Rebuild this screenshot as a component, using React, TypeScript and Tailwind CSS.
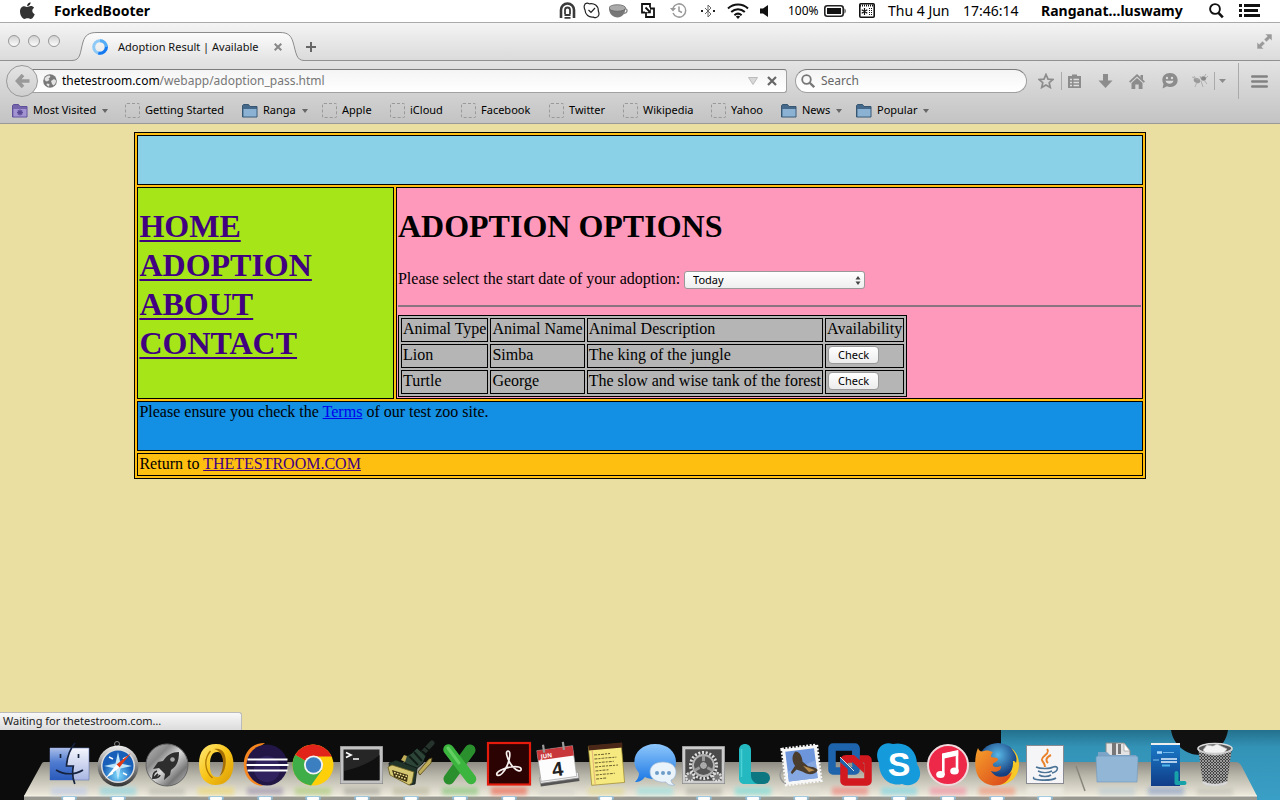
import React from "react";

type Kids = { children: React.ReactNode };

/* ---------- menu bar ---------- */

function Slot({ className, children }: Kids & { className: string }) {
  return <span className={"flex shrink-0 items-center justify-center " + className}>{children}</span>;
}

function AppleLogo() {
  return (
    <svg width="17" height="18" viewBox="0 0 17 18" aria-hidden="true">
      <path d="M11.6 0.3c.1 2.100-1.600 3.900-3.500 3.900-.1-2 1.600-3.700 3.500-3.900z" fill="#222" />
      <path d="M8.300 5c.8 0 1.900-.9 3.500-.9 1.400 0 2.600.7 3.300 1.700-2.600 1.500-2.300 5.200.6 6.400-.6 1.700-2.100 4.700-4 4.700-1.200 0-1.600-.7-3.100-.7s-2 .7-3.100.7C3.400 16.900 1 13 1 9.500c0-3.500 2.200-5.300 4.300-5.300 1.400 0 2.300.8 3 .8z" fill="#333" />
    </svg>
  );
}

function MenuBar() {
  return (
    <header className="flex h-[22px] items-center bg-white pb-px text-[14px] leading-5 text-black">
      <button className="ml-[19px]" aria-label="Apple menu"><AppleLogo /></button>
      <button className="ml-[18px] font-bold">ForkedBooter</button>
      <div className="ml-auto flex items-center pr-5">
        <Slot className="w-6">
          <svg width="17" height="17" viewBox="0 0 17 17" fill="none" stroke="#3a3a3a">
            <path d="M2 16V8a6.500 6.500 0 0 1 13 0v8" strokeWidth="2.600" />
            <path d="M6 12V8a2.500 2.500 0 0 1 5 0v4" strokeWidth="1.800" />
            <path d="M5.500 13h6M5.500 15.800h6" strokeWidth="1.800" />
          </svg>
        </Slot>
        <Slot className="w-6">
          <svg width="17" height="17" viewBox="0 0 17 17" fill="none" stroke="#222" strokeWidth="1.200">
            <path d="M2 8C.5 5 1 1.500 4 1.200c1.200-.1 2 .4 2.500.6C11 1 15.500 3.500 15.300 9c1.300 2.600.8 6.200-2.600 6.700-1.300.1-2-.4-2.600-.7C6 15.500 2.200 13 2 8z" />
            <path d="M5.500 8l2.500 2.500L12 6" />
          </svg>
        </Slot>
        <Slot className="w-[30px]">
          <svg width="19" height="14" viewBox="0 0 19 14">
            <path d="M0 4c0 6 4 9.500 8.500 9.500S16 10 16.500 4z" fill="#777" />
            <ellipse cx="8.300" cy="4" rx="8.300" ry="3.300" fill="#aaa" stroke="#666" strokeWidth=".8" />
            <path d="M16 5c3-.5 3 4-1.500 4.500" fill="none" stroke="#888" strokeWidth="1.300" />
          </svg>
        </Slot>
        <Slot className="w-[30px]">
          <svg width="14" height="15" viewBox="0 0 14 15" fill="none" stroke="#111" strokeWidth="1.800">
            <path d="M4 9.500H1V1h8v3.500M9 5.500h4V14H5V9" />
            <path d="M4.500 4.500L8 8" />
            <path d="M9.800 6v4.300H5.500z" fill="#111" stroke="none" />
          </svg>
        </Slot>
        <Slot className="w-[30px]">
          <svg width="17" height="16" viewBox="0 0 17 16" fill="none" stroke="#999" strokeWidth="1.500">
            <path d="M3 10a6.600 6.600 0 1 0 0-5M9 3.500V8l3 1.500" />
            <path d="M0 5l3 3.500L6 5z" fill="#999" stroke="none" />
          </svg>
        </Slot>
        <Slot className="w-[30px]">
          <svg width="14" height="14" viewBox="0 0 14 14" fill="none" stroke="#666">
            <path d="M4 4l6 6-3 3V1l3 3-6 6" />
            <path d="M0 7h2M12 7h2" stroke="#222" strokeWidth="2" />
          </svg>
        </Slot>
        <Slot className="w-[30px]">
          <svg width="22" height="16" viewBox="0 0 22 16" fill="none" stroke="#111" strokeWidth="2">
            <path d="M1 5.500c5.500-5.300 14.500-5.300 20 0M4.200 9c4-3.800 9.600-3.800 13.600 0M7.400 12.200c2.300-2 4.900-2 7.200 0" />
            <path d="M8.800 13.500L11 16l2.200-2.500c-1.200-1.100-3.200-1.100-4.400 0z" fill="#111" stroke="none" />
          </svg>
        </Slot>
        <Slot className="w-[22px]">
          <svg width="8" height="12" viewBox="0 0 8 12"><path d="M0 3.500h3L8 0v12L3 8.500H0z" fill="#111" /></svg>
        </Slot>
        <span className="ml-[13px] w-8 text-[12px]">100%</span>
        <Slot className="ml-1 w-[22px]">
          <svg width="22" height="12" viewBox="0 0 22 12">
            <rect x=".8" y=".8" width="18.400" height="10.400" rx="2.500" fill="none" stroke="#222" strokeWidth="1.600" />
            <rect x="3" y="3" width="14" height="6" fill="#111" />
            <path d="M20.500 3.500c1.500.5 1.500 4.500 0 5z" fill="#222" />
          </svg>
        </Slot>
        <Slot className="ml-[13px] w-4">
          <svg width="16" height="15" viewBox="0 0 16 15">
            <rect x=".8" y=".8" width="14.400" height="13.400" rx="1" fill="#fff" stroke="#111" strokeWidth="1.600" />
            <path d="M1 2.500h14" stroke="#111" strokeWidth="2" strokeDasharray="1 1" />
            <path d="M5.500 5v7M2.700 6.800l5.600 3.500M8.300 6.800l-5.600 3.500" stroke="#111" strokeWidth="1.200" />
            <path d="M10.500 5v8M12.500 5v8" stroke="#111" strokeDasharray="1 1" />
          </svg>
        </Slot>
        <span className="ml-[13px] w-[65px] whitespace-nowrap">Thu 4 Jun</span>
        <span className="ml-[10px] w-[60px] whitespace-nowrap">17:46:14</span>
        <button className="ml-[18px] w-[146px] whitespace-nowrap text-left font-bold">Ranganat…luswamy</button>
        <button className="ml-[22px]" aria-label="Spotlight">
          <svg width="15" height="16" viewBox="0 0 15 16" fill="none" stroke="#111"><circle cx="6" cy="6" r="4.900" strokeWidth="1.900" /><path d="M9.500 9.800l4.300 4.500" strokeWidth="2.600" /></svg>
        </button>
        <button className="ml-[15px]" aria-label="Notification centre">
          <svg width="21" height="13" viewBox="0 0 21 13" stroke="#111" strokeWidth="3"><path d="M0 1.500h3M5 1.500h16M0 6.500h3M5 6.500h14M0 11.500h3M5 11.500h16" /></svg>
        </button>
      </div>
    </header>
  );
}

/* ---------- browser chrome ---------- */

function TabStrip() {
  return (
    <div className="flex h-[39px] border-t border-[#aaa] bg-linear-to-b from-[#f4f4f4] to-[#dadada]">
      <div className="flex w-[72px] items-center gap-2 border-b border-[#909090] pb-px pl-2">
        {["Close window", "Minimise window", "Zoom window"].map((l) => (
          <button key={l} aria-label={l} className="size-3 rounded-full border border-[#989898] bg-linear-to-b from-[#d2d2d2] to-[#fcfcfc]" />
        ))}
      </div>
      <div className="relative flex w-[232px] items-center pl-5 pt-[10px]">
        <svg className="absolute inset-0" width="232" height="38" viewBox="0 0 232 38" aria-hidden="true">
          <defs>
            <linearGradient id="tabFill" x1="0" y1="0" x2="0" y2="1"><stop stopColor="#fcfcfc" /><stop offset="1" stopColor="#e3e3e3" /></linearGradient>
          </defs>
          <path d="M0 38V37.500C9 37.500 8 29 11 19 13 12 17 9.500 25 9.500H208c8 0 11 3 13 9.500 3 10 3 18.500 11 18.500V38z" fill="url(#tabFill)" />
          <path d="M0 37.500C9 37.500 8 29 11 19 13 12 17 9.500 25 9.500H208c8 0 11 3 13 9.500 3 10 3 18.500 11 18.500" fill="none" stroke="#8c8c8c" />
        </svg>
        <svg className="relative" width="16" height="16" viewBox="0 0 16 16" fill="none" strokeWidth="3" aria-hidden="true">
          <circle cx="8" cy="8" r="6.300" stroke="#8fcaf7" />
          <path d="M14.300 7a6.300 6.300 0 0 1-8 7" stroke="#1479f0" />
          <path d="M8 1.700A6.300 6.300 0 0 1 14.300 8" stroke="#55adf5" />
        </svg>
        <span className="relative ml-[10px] w-[154px] whitespace-nowrap text-[11px] text-[#111]">Adoption Result | Available</span>
        <button className="relative ml-[2px]" aria-label="Close tab">
          <svg width="8" height="8" viewBox="0 0 8 8" stroke="#888" strokeWidth="2"><path d="M.7.7l6.600 6.600M7.300.7L.7 7.300" /></svg>
        </button>
      </div>
      <div className="flex flex-1 items-center border-b border-[#909090] pr-2">
        <button aria-label="New tab" className="ml-[2px] mt-[10px]">
          <svg width="10" height="10" viewBox="0 0 10 10" stroke="#666" strokeWidth="2"><path d="M5 0v10M0 5h10" /></svg>
        </button>
        <button aria-label="Full screen" className="ml-auto">
          <svg width="15" height="15" viewBox="0 0 15 15" fill="#999"><path d="M8 0h7v7l-2.200-2.200L9.500 8 7 5.500l3.300-3.200zM0 15V8l2.200 2.200L5.500 7 8 9.500l-3.300 3.200L7 15z" stroke="#e8e8e8" strokeWidth=".6" /></svg>
        </button>
      </div>
    </div>
  );
}

function Tool({ label, className, children }: Kids & { label: string; className: string }) {
  return <button aria-label={label} className={"flex shrink-0 justify-center " + className}>{children}</button>;
}

function NavBar() {
  return (
    <div className="flex h-10 items-center pl-[6px]">
      <button aria-label="Back" className="z-10 flex size-8 shrink-0 items-center justify-center rounded-full border border-[#999] bg-linear-to-b from-[#e4e4e4] to-[#cfcfcf]">
        <svg width="15" height="14" viewBox="0 0 15 14" fill="none" stroke="#999" strokeWidth="3.600"><path d="M8 1L2.500 7 8 13M3 7h11.500" /></svg>
      </button>
      <div className="-ml-2 flex h-6 flex-1 items-center rounded-[3px] border border-[#a0a0a0] border-t-[#7c7c7c] bg-linear-to-b from-[#f4f4f4] to-white pl-3 pr-[9px] text-[12px]">
        <svg width="14" height="14" viewBox="0 0 14 14" aria-hidden="true">
          <circle cx="7" cy="7" r="6.800" fill="#787878" />
          <path d="M1.500 5c1-2.500 3-3.700 5-3.500L7.500 3 5.500 4.500l1 1.500L4 7.500 2.500 7zM8 7l3-2 2 1.500c.2 2-1 4-2.500 5L9 10zM4 9.500l2.500.5-.5 2.500c-1-.3-2-1-2.500-2z" fill="#e3e3e3" />
        </svg>
        <span className="ml-[5px] flex-1 whitespace-nowrap">
          <span className="text-black">thetestroom.com</span><span className="text-[#777]">/webapp/adoption_pass.html</span>
        </span>
        <button aria-label="History drop-down"><svg width="10" height="8" viewBox="0 0 10 8"><path d="M.5.5h9L5 7.500z" fill="#d8d8d8" stroke="#bbb" /></svg></button>
        <button aria-label="Stop" className="ml-[9px]"><svg width="10" height="10" viewBox="0 0 10 10" stroke="#666" strokeWidth="2.200"><path d="M1 1l8 8M9 1L1 9" /></svg></button>
      </div>
      <label className="ml-2 flex h-6 w-[232px] items-center rounded-full border border-[#a0a0a0] border-t-[#7c7c7c] bg-linear-to-b from-[#f4f4f4] to-white pl-[5px] pr-3">
        <svg width="14" height="14" viewBox="0 0 14 14" fill="none" stroke="#777" strokeWidth="1.800" aria-hidden="true" className="shrink-0"><circle cx="5.500" cy="5.500" r="4.300" /><path d="M8.700 8.700l4.500 4.500" strokeWidth="2.300" /></svg>
        <input aria-label="Search" placeholder="Search" className="ml-[6px] w-full bg-transparent text-[12px] outline-none placeholder:text-[#666]" />
      </label>
      <div className="flex h-full items-center">
        <Tool label="Bookmark this page" className="ml-[11px] w-4">
          <svg width="16" height="16" viewBox="0 0 16 16"><path d="M8 1.500l2 4.600 4.900.4-3.700 3.200 1.100 4.800L8 12l-4.300 2.500 1.100-4.800L1.100 6.500 6 6.100z" fill="none" stroke="#8c8c8c" strokeWidth="1.700" /></svg>
        </Tool>
        <span className="ml-[7px] h-[18px] w-px bg-[#aaa]" />
        <Tool label="Bookmarks" className="ml-[5px] w-[15px]">
          <svg width="15" height="16" viewBox="0 0 15 16"><path d="M1 3h4V1.500h5V3h4v12H1z" fill="#8c8c8c" /><path d="M3 6.500h2M6.500 6.500H12M3 9.500h2M6.500 9.500H12M3 12.500h2M6.500 12.500H12" stroke="#ddd" strokeWidth="1.600" /></svg>
        </Tool>
        <Tool label="Downloads" className="ml-4 w-[15px]">
          <svg width="15" height="15" viewBox="0 0 15 15"><path d="M5 0h5v6.500h4.500L7.500 14 .5 6.500H5z" fill="#8c8c8c" /></svg>
        </Tool>
        <Tool label="Home" className="ml-4 w-4">
          <svg width="16" height="15" viewBox="0 0 16 15" fill="#8c8c8c"><path d="M8 0l8 7.500-1.300 1.200L8 2.500 1.300 8.700 0 7.500zM11.500 1H14v4.500L11.500 3z" /><path d="M8 4l5.500 5v6H9.700v-4.500H6.300V15H2.500V9z" /></svg>
        </Tool>
        <Tool label="Hello" className="ml-4 w-[17px]">
          <svg width="17" height="16" viewBox="0 0 17 16"><path d="M9 0c9 0 10.500 12 2 13.700-2.300.4-4 .1-5-.5L1.500 15.500l1-4.500C-.5 6 2.500 0 9 0z" fill="#8c8c8c" /><circle cx="6" cy="5" r="1.200" fill="#ddd" /><circle cx="11" cy="5" r="1.200" fill="#ddd" /><path d="M4.500 7.800h8c-.8 4-7.200 4-8 0z" fill="#ddd" /></svg>
        </Tool>
        <Tool label="Firebug" className="ml-[14px] w-4">
          <svg width="16" height="14" viewBox="0 0 16 14" fill="#999"><ellipse cx="5" cy="6.500" rx="3.400" ry="2.500" transform="rotate(25 5 6.500)" /><ellipse cx="11.500" cy="4.500" rx="2.600" ry="2.200" fill="#888" /><path d="M7 6L0 3M5 8l-2 5M9 7l2 6M12 6l3 4M12 3l2-3M14 4l2-2M4 5L2 2M9 5L8 2" stroke="#aaa" strokeWidth=".9" /></svg>
        </Tool>
        <span className="ml-[6px] h-[18px] w-px bg-[#aaa]" />
        <Tool label="Firebug options" className="ml-[3px] w-2"><svg width="7" height="4" viewBox="0 0 7 4"><path d="M0 0h7L3.500 4z" fill="#8c8c8c" /></svg></Tool>
        <span className="ml-3 h-9 w-px bg-[#aaa]" />
        <Tool label="Open menu" className="ml-3 mr-3 w-[17px]">
          <svg width="17" height="13" viewBox="0 0 17 13" stroke="#828282" strokeWidth="2.600" strokeLinecap="round"><path d="M1.300 1.500h14.400M1.300 6.500h14.400M1.300 11.500h14.400" /></svg>
        </Tool>
      </div>
    </div>
  );
}

function FolderIcon({ smart }: { smart?: boolean }) {
  return (
    <svg width="16" height="14" viewBox="0 0 16 14" aria-hidden="true" className="shrink-0">
      <path d="M.5 13V1.500L1.500.5h5l1.500 2h7v10.500z" fill={smart ? "#7464ac" : "#44698a"} stroke={smart ? "#5f4f99" : "#365672"} />
      <path d="M1.500 5h13v7.500h-13z" fill={smart ? "#a294d2" : "#8bb2d3"} />
      {smart && <path d="M8 5.500v6M5 8.500h6M5.900 6.400l4.200 4.200M10.100 6.400l-4.200 4.200" stroke="#5a4a96" strokeWidth="1.300" />}
    </svg>
  );
}

const bookmarks: { name: string; width: string; kind: "page" | "folder" | "smart" }[] = [
  { name: "Most Visited", width: "w-[113px]", kind: "smart" },
  { name: "Getting Started", width: "w-[117px]", kind: "page" },
  { name: "Ranga", width: "w-20", kind: "folder" },
  { name: "Apple", width: "w-[68px]", kind: "page" },
  { name: "iCloud", width: "w-[71px]", kind: "page" },
  { name: "Facebook", width: "w-[88px]", kind: "page" },
  { name: "Twitter", width: "w-[74px]", kind: "page" },
  { name: "Wikipedia", width: "w-[88px]", kind: "page" },
  { name: "Yahoo", width: "w-[70px]", kind: "page" },
  { name: "News", width: "w-[75px]", kind: "folder" },
  { name: "Popular", width: "w-20", kind: "folder" },
];

function BookmarksBar() {
  return (
    <nav className="flex h-[22px] pb-[3px] pl-3 text-[11px] text-black">
      {bookmarks.map((b) => (
        <button key={b.name} className={"flex shrink-0 items-center whitespace-nowrap " + b.width}>
          {b.kind === "page" ? <span className="size-[15px] rounded-[2px] border border-dashed border-[#999]" /> : <FolderIcon smart={b.kind === "smart"} />}
          <span className="ml-[5px]">{b.name}</span>
          {b.kind !== "page" && <svg className="ml-[6px]" width="6" height="4" viewBox="0 0 6 4"><path d="M0 0h6L3 4z" fill="#666" /></svg>}
        </button>
      ))}
    </nav>
  );
}

/* ---------- web page ---------- */

function CheckButton() {
  return (
    <button className="block h-[18px] w-[51px] rounded-[4px] border border-[#999] bg-linear-to-b from-white to-[#ececec] font-[Lucida_Grande,Noto_Sans,sans-serif] text-[11px] leading-4 text-black">Check</button>
  );
}

const animals = [
  ["Lion", "Simba", "The king of the jungle"],
  ["Turtle", "George", "The slow and wise tank of the forest"],
];

function WebPage() {
  const td = "h-6 border border-black px-px py-0 text-left align-top font-normal whitespace-nowrap";
  return (
    <main className="relative flex-1 bg-[#eadea1] p-2 font-[Liberation_Serif,serif] text-[16px] leading-5 text-black">
      <div className="mx-auto flex w-4/5 flex-col gap-[2px] border border-black bg-[#ffbf10] p-[2px]">
        <div className="h-[50px] border border-black bg-[#8ad0e6]" />
        <div className="grid min-h-[212px] grid-cols-[256fr_745fr] gap-[2px]">
          <nav className="border border-black bg-[#a6e619] px-px pt-[19px]">
            <ul className="text-[32px] font-bold leading-[39px] text-[#400080]">
              {["HOME", "ADOPTION", "ABOUT", "CONTACT"].map((t) => (
                <li key={t}><a href="#" className="underline decoration-2 underline-offset-[3px] [text-decoration-skip-ink:none]">{t}</a></li>
              ))}
            </ul>
          </nav>
          <section className="border border-black bg-[#ff99bb] px-px pt-[19px]">
            <h1 className="text-[32px] font-bold leading-[39px]">ADOPTION OPTIONS</h1>
            <div className="mt-[23px] flex items-center">
              <label htmlFor="start">Please select the start date of your adoption:</label>
              <span className="relative ml-1 mt-[2px] flex">
                <select id="start" className="h-[18px] w-[181px] appearance-none rounded-[3px] border border-[#999] bg-linear-to-b from-white to-[#eee] pl-2 font-[Lucida_Grande,Noto_Sans,sans-serif] text-[11px] leading-4">
                  <option>Today</option>
                </select>
                <svg className="pointer-events-none absolute right-1 top-[5px]" width="6" height="9" viewBox="0 0 6 9" fill="#444"><path d="M3 0l2.500 3.500h-5zM3 9L.5 5.500h5z" /></svg>
              </span>
            </div>
            <hr className="mt-4 border-t-2 border-[#8a7580]" />
            <table className="mt-2 border-separate border-spacing-[2px] border border-black bg-[#b5b5b5]">
              <thead>
                <tr>
                  <th className={td}>Animal Type</th>
                  <th className={td}>Animal Name</th>
                  <th className={td}>Animal Description</th>
                  <th className={td}>Availability</th>
                </tr>
              </thead>
              <tbody>
                {animals.map((row) => (
                  <tr key={row[0]}>
                    {row.map((c) => <td key={c} className={td}>{c}</td>)}
                    <td className="border border-black py-0 pl-[2px] pr-px pt-px align-top"><CheckButton /></td>
                  </tr>
                ))}
              </tbody>
            </table>
          </section>
        </div>
        <div className="h-[50px] border border-black bg-[#138fe3] px-px">
          Please ensure you check the <a href="#" className="text-[#0000ee] underline">Terms</a> of our test zoo site.
        </div>
        <div className="h-[23px] border border-black px-px">
          Return to <a href="#" className="text-[#400080] underline">THETESTROOM.COM</a>
        </div>
      </div>
      <div className="absolute bottom-0 left-0 h-[18px] w-[242px] rounded-tr-[3px] border-r border-t border-[#bbb] bg-linear-to-b from-[#f8f8f8] to-[#dcdcdc] pl-[3px] font-[Lucida_Grande,Noto_Sans,sans-serif] text-[11px] leading-4 text-[#222]">
        Waiting for thetestroom.com…
      </div>
    </main>
  );
}

/* ---------- dock ---------- */

const Finder = () => (
  <>
    <defs>
      <linearGradient id="fnL" x2="0" y2="1"><stop stopColor="#a9bde8" /><stop offset=".45" stopColor="#4f7bd0" /><stop offset="1" stopColor="#2a5abb" /></linearGradient>
      <linearGradient id="fnR" x2="0" y2="1"><stop stopColor="#f4f6fd" /><stop offset="1" stopColor="#a9b6e2" /></linearGradient>
    </defs>
    <path d="M5 8h39v32H5z" fill="url(#fnR)" stroke="#667bb5" strokeWidth=".6" />
    <path d="M5 8h23c-4 5-6 11-6 18h6c-1 5-1 9 0 14H5z" fill="url(#fnL)" />
    <path d="M30 3c-5 6-8 14-8.500 23h6.800c-1.300 7-.6 13 1.500 18M11 30c8 5 19 5 27 0M15.500 14v4M33.500 14v4" fill="none" stroke="#16233f" strokeWidth="1.700" />
  </>
);

const Safari = () => (
  <>
    <defs>
      <radialGradient id="sfB" cy=".8"><stop stopColor="#7fdcff" /><stop offset="1" stopColor="#175fb8" /></radialGradient>
      <linearGradient id="sfM" x2="0" y2="1"><stop stopColor="#eee" /><stop offset=".5" stopColor="#888" /><stop offset="1" stopColor="#333" /></linearGradient>
    </defs>
    <circle cx="23" cy="4" r="2.500" fill="none" stroke="#888" />
    <circle cx="24" cy="26" r="20.500" fill="url(#sfM)" />
    <circle cx="24" cy="26" r="17" fill="#ddd" />
    <circle cx="24" cy="26" r="15.500" fill="url(#sfB)" />
    <path d="M24 12l2.500 11.500L38 26l-11.500 2.500L24 40l-2.500-11.500L10 26l11.500-2.500z" fill="#bfe6fa" />
    <path d="M15 17l4 2M33 17l-4 2M15 35l4-2M33 35l-4-2" stroke="#fff" strokeWidth="1.500" />
    <path d="M37 13L22.500 24.500l3 3z" fill="#e23a17" /><path d="M11 39l11.500-14.500 3 3z" fill="#fff" />
  </>
);

const Launchpad = () => (
  <>
    <defs><linearGradient id="lpM" x2="1" y2="1"><stop stopColor="#bbb" /><stop offset=".3" stopColor="#888" /><stop offset=".5" stopColor="#ddd" /><stop offset=".75" stopColor="#777" /><stop offset="1" stopColor="#ccc" /></linearGradient></defs>
    <circle cx="24" cy="25" r="21" fill="url(#lpM)" stroke="#666" />
    <path d="M36 12c-7 0-12 3-16 9l-5 1-5 7 6-1 6 6-1 6 6-5 1-5c6-4 8-9 8-18z" fill="#2e2e2e" />
    <circle cx="29.500" cy="19.500" r="2.300" fill="#aaa" />
    <path d="M14 31c-4 1-4 5-4 7 3 0 6 0 7-3M11 38l4-4" fill="none" stroke="#2e2e2e" strokeWidth="1.800" />
  </>
);

const Outlook = () => (
  <>
    <defs><linearGradient id="olY" x2="1" y2="1"><stop stopColor="#ffe97a" /><stop offset=".5" stopColor="#f8c416" /><stop offset="1" stopColor="#d99a05" /></linearGradient></defs>
    <path fillRule="evenodd" d="M24 4c11 0 17.500 8 17.500 20S35 45 24 45 7 37 7 24 13 4 24 4zm1.500 8C20 12 18 17 18 25s2 12 7 12 6.500-4 6.500-12-1-13-6-13z" fill="url(#olY)" />
    <path d="M18.500 11c-7 8-6 20 2 27" fill="none" stroke="#b17a03" strokeWidth="1.300" />
    <path d="M22 9c9-2 13 6 11.500 16-1 6-3 9-6 11 5-8 6-24-5.500-27z" fill="#a66f05" />
  </>
);

const Eclipse = () => (
  <>
    <path d="M24 3C-4 2-4 45 22 46 8 36 8 12 24 3z" fill="#f5851f" />
    <circle cx="26" cy="25" r="20.500" fill="#211646" />
    <circle cx="26" cy="29" r="13" fill="#30225f" />
    <path d="M6.500 19.500h40M5.500 25h42M6.500 30.500h40" stroke="#fff" strokeWidth="2.200" />
  </>
);

const Chrome = () => (
  <>
    <circle cx="24" cy="25" r="20.500" fill="#ffcf0a" />
    <path d="M24 25L6.200 14.800A20.500 20.500 0 0 0 22 45.400L33 30z" fill="#3fae49" />
    <path d="M24 25L6.200 14.800A20.500 20.500 0 0 1 42.700 16.500H24z" fill="#e2231a" />
    <circle cx="24.500" cy="25" r="9.500" fill="#f4f4f4" /><circle cx="24.500" cy="25" r="7.700" fill="#3b7fc0" />
  </>
);

const Terminal = () => (
  <>
    <rect x="2.500" y="6.500" width="42" height="37" fill="#222" stroke="#777" />
    <rect x="4" y="8" width="39" height="34" fill="#262626" stroke="#c2c2c2" strokeWidth="3" />
    <path d="M6 40V31C20 28 32 23 41.500 15v25z" fill="#101010" />
    <path d="M8 12.500l5 2.500-5 2.500M15 19h6" fill="none" stroke="#fff" strokeWidth="1.700" />
  </>
);

const SerialPlug = () => (
  <>
    <path d="M45 3L33 16" stroke="#26332c" strokeWidth="5" strokeLinecap="round" />
    <path d="M38 7l6 5M35 11l5 4" stroke="#0b120e" strokeWidth="1.500" />
    <path d="M15 19l10-6 5-5 9 8-3 7-10 9z" fill="#2c4538" stroke="#0c1310" />
    <path d="M22 16l9 9M27 12l8 9" stroke="#111c16" strokeWidth="2" />
    <path d="M2 23l7-3 21 8-2 16-5 1L3 34z" fill="#20342a" stroke="#0c1310" strokeWidth=".8" />
    <path d="M1 27l4-2 22 7-2 11-3 2L3 35z" fill="#d6c873" stroke="#6a5d20" strokeWidth=".8" />
    <path d="M5 30l16 5-1 7-13-5z" fill="#3d3210" />
    <path d="M7 32.500l13 4M8.500 35.500l10 3.500" stroke="#f1df93" strokeWidth="1.500" strokeDasharray="1.700 1.300" />
    <path d="M31 32l11-13 3-1-1 5-11 12z" fill="#c0ad58" stroke="#544819" strokeWidth=".8" />
    <path d="M14 20l3-5 3 1-2 6z" fill="#c0ad58" />
  </>
);

const Excel = () => (
  <>
    <path d="M34 10L13 39" stroke="#2a8f2d" strokeWidth="11" strokeLinecap="round" />
    <path d="M12.500 9.500L35 39" stroke="#3cb53f" strokeWidth="10.500" strokeLinecap="round" />
    <path d="M12 8l11 15" stroke="#63cf63" strokeWidth="3" strokeLinecap="round" />
  </>
);

const Acrobat = () => (
  <>
    <rect x="3" y="3" width="42" height="41.500" fill="#2b0303" stroke="#e21b0c" strokeWidth="2.200" />
    <path d="M23 11c3 0 2 8-1 15-3 6-7 11-10 9-2-3 7-7 14-8 6-1 11 0 10 3-2 3-8-2-11-7-3-5-5-12-2-12z" fill="none" stroke="#f5f0ee" strokeWidth="1.700" />
  </>
);

const Calendar = () => (
  <g transform="rotate(-8 24 25)">
    <path d="M5 38h39v6H5z" fill="#555" /><path d="M5 35h39v6H5z" fill="#eee" stroke="#888" strokeWidth=".7" />
    <rect x="6" y="8" width="36" height="31" fill="#fdfdfd" stroke="#999" strokeWidth=".6" />
    <path d="M6 8h36v10H6z" fill="#c8383a" />
    <path d="M13 3v8M33 3v8" stroke="#999" strokeWidth="2.200" />
    <text x="9" y="16.500" fontSize="6" fontWeight="700" fill="#fff" fontFamily="Noto Sans">JUN</text>
    <text x="24" y="36" fontSize="20" fontWeight="700" textAnchor="middle" fill="#222" fontFamily="Liberation Sans">4</text>
  </g>
);

const Notes = () => (
  <g transform="rotate(-5 24 25)">
    <rect x="8" y="5" width="33" height="39" fill="#f6e980" stroke="#9a8a30" strokeWidth=".7" />
    <rect x="8" y="4" width="34" height="5" fill="#4a2716" />
    <path d="M11.500 9v35" stroke="#e0a878" strokeWidth=".8" />
    <path d="M13 14h16M13 18h22M13 22h19M13 26h23M13 30h14M13 34h19M13 38h10" stroke="#6d6230" strokeWidth="1" strokeDasharray="3 1 2 1" />
  </g>
);

const Messages = () => (
  <>
    <defs><linearGradient id="msB" x2="0" y2="1"><stop stopColor="#8ec7fb" /><stop offset="1" stopColor="#1b77e4" /></linearGradient></defs>
    <path d="M24 4c13 0 21 8 21 18S37 39 24 39c-4 0-7-.5-10-2-3 4-6 5-10 5 3-3 4-6 4-9C-3 20 7 4 24 4z" fill="url(#msB)" />
    <path d="M32 22c8 0 13 4 13 10 0 4-2 7-5 8 0 3 2 4 4 5-5 1-8-1-9-3-9 1-16-3-16-10 0-6 5-10 13-10z" fill="#eaf2fa" stroke="#9bb6d4" strokeWidth=".7" />
    <g fill="#6f9cc7"><circle cx="26" cy="33" r="2" /><circle cx="32" cy="33" r="2" /><circle cx="38" cy="33" r="2" /></g>
  </>
);

const Preferences = () => (
  <>
    <rect x="2.500" y="6.500" width="42" height="37" fill="#484848" stroke="#888" />
    <rect x="4" y="8" width="39" height="34" fill="#4a4a4a" stroke="#ccc" strokeWidth="2.600" />
    <circle cx="10" cy="37" r="4" fill="#777" stroke="#ddd" strokeWidth="2.500" strokeDasharray="2 1" /><circle cx="37" cy="37" r="4" fill="#777" stroke="#ddd" strokeWidth="2.500" strokeDasharray="2 1" />
    <circle cx="23.500" cy="25.500" r="13" fill="#3a3a3a" stroke="#ddd" strokeWidth="3" strokeDasharray="2 1.710" />
    <circle cx="23.500" cy="25.500" r="10.500" fill="#555" stroke="#b5b5b5" strokeWidth="2" />
    <path d="M23.500 25.500v-10M23.500 25.500l9 5M23.500 25.500l-9 5" stroke="#999" strokeWidth="3" />
    <circle cx="23.500" cy="25.500" r="4" fill="#aaa" stroke="#444" />
  </>
);

const Lync = () => (
  <>
    <path d="M17 38h18" stroke="#0c7681" strokeWidth="12" strokeLinecap="round" />
    <path d="M10 10c0-8 12-8 12 0v25c0 5 3 8 7 9H16c-4 0-6-2-6-6z" fill="#24b8c1" />
    <path d="M12.500 9v28" stroke="#4bd0d6" strokeWidth="1.500" />
  </>
);

const Mail = () => (
  <>
    <circle cx="12" cy="35" r="9" fill="none" stroke="#999" strokeWidth="1.500" />
    <g transform="rotate(-7 24 25)">
      <rect x="7" y="7" width="35" height="36" fill="#f7f7f7" stroke="#f7f7f7" strokeWidth="3" strokeDasharray="2 1.500" />
      <rect x="10" y="10" width="29" height="30" fill="#6c95dc" /><path d="M10 30l29-8v18H10z" fill="#86a8e2" />
      <path d="M20 11c5 1 6 6 6 11l5 5c3 1 8 2 9 5-3 5-11 4-15 0l-6-3-5 4-1-2 5-6c-3-5-2-11 2-14z" fill="#4b3d2e" />
      <path d="M26 26l6 3 5 3-6 1z" fill="#b88d4b" />
    </g>
  </>
);

const VMware = () => (
  <>
    <rect x="6" y="7" width="24" height="24" rx="1" fill="none" stroke="#1e64ad" strokeWidth="7.500" />
    <rect x="18" y="19" width="24" height="23" rx="1" fill="none" stroke="#d2191f" strokeWidth="7.500" />
    <path d="M26.200 8h7.500v18h-4l-3.500-3z" fill="#1e64ad" />
    <path d="M14 17v5l12 11v-5z" fill="#1e64ad" /><path d="M19 15h9l10 9v9z" fill="#d2191f" /><path d="M14 17l14 14" stroke="#e4e0d6" strokeWidth="1" />
  </>
);

const Skype = () => (
  <>
    <path d="M4 23C-2 11 7 0 18 4c13-3 24 6 24 20 9 14-3 25-15 20C14 47 4 37 4 23z" fill="#159bdc" />
    <text x="24" y="36" fontSize="34" fontWeight="700" textAnchor="middle" fill="#fff" fontFamily="Liberation Sans">S</text>
  </>
);

const ITunes = () => (
  <>
    <circle cx="24" cy="25" r="20" fill="#ee2849" stroke="#f0dadd" strokeWidth="2" />
    <path d="M19 15l14-3v19" fill="none" stroke="#fff" strokeWidth="2.600" /><path d="M18 13.500l16.200-3.500v5.500L18 19z" fill="#fff" /><path d="M19.300 15v20" stroke="#fff" strokeWidth="2.600" />
    <ellipse cx="16.500" cy="34.500" rx="4.300" ry="3.500" fill="#fff" /><ellipse cx="30.500" cy="31" rx="4.300" ry="3.500" fill="#fff" />
  </>
);

const Firefox = () => (
  <>
    <defs><radialGradient id="ffB" cx=".5" cy=".3"><stop stopColor="#58b7e6" /><stop offset="1" stopColor="#173e7e" /></radialGradient><linearGradient id="ffO" x2="1" y2="1"><stop stopColor="#f6a02a" /><stop offset="1" stopColor="#d8411b" /></linearGradient></defs>
    <circle cx="25" cy="23" r="20" fill="url(#ffB)" />
    <path d="M38 8c6 7 6 11 5 15-1-2-2-2-3-2 1 12-8 20-20 19-4-1-7-2-9-4 6 14 34 12 35-11 0-8-3-14-8-17z" fill="#f8c926" />
    <path d="M5 8c1 3 3 4 6 3 3-1 6 0 9 1-2 2-2 4-2 5 3 1 6 0 7 2 0 3-4 3-5 5-1 3 3 4 8 2 1 5-6 7-10 5 3 6 13 9 21 1-4 16-23 17-32 7C1 32 1 17 5 8z" fill="url(#ffO)" />
  </>
);

const Java = () => (
  <>
    <rect x="5.500" y="5.500" width="37" height="38" fill="#f5f5f8" stroke="#8a8a92" />
    <path d="M26 9c4 5-6 7-5 11 1 3 3 3 3 7M30 15c-6 3-5 6-3 8" fill="none" stroke="#e8812a" strokeWidth="2" />
    <path d="M15 27c4 2 14 2 17 0M17 31c4 2 10 2 14 0M18 35c3 2 9 2 12 0M32 27c7-2 5 5-1 6M13 37c-4 4 18 4 22 1" fill="none" stroke="#4b7396" strokeWidth="1.600" />
  </>
);

const DocumentsFolder = () => (
  <>
    <path d="M13 3h18l6 8v10H13z" fill="#e3e3e3" stroke="#888" /><path d="M19 3h4v12h-4zM25 4h3v10h-3z" fill="#777" /><path d="M31 3v8h6z" fill="#fff" stroke="#999" strokeWidth=".7" />
    <path d="M5 12h9l3 3h26v20H5z" fill="#7ba4c6" /><path d="M3 18c0-1 1-2 2-2h38c1 0 2 1 2 2l-1 24H4z" fill="#92b6d6" stroke="#7398b8" strokeWidth=".6" />
  </>
);

const LyncWindow = () => (
  <>
    <defs><linearGradient id="lwB" x2="0" y2="1"><stop stopColor="#1a7dca" /><stop offset="1" stopColor="#103c88" /></linearGradient></defs>
    <path d="M9 3h29v43H9z" fill="url(#lwB)" /><path d="M9 3h29v2H9z" fill="#eee" />
    <path d="M15 12.500h5" stroke="#a6d7ff" strokeWidth="2.500" /><path d="M21 12.500h11" stroke="#6fb6ea" /><path d="M19 19h16M19 22h16" stroke="#e3f2ff" strokeWidth="1.500" /><path d="M11 20h6" stroke="#7fc1f0" /><path d="M20 25.500h8" stroke="#51b9ec" strokeWidth="2" />
    <path d="M34.500 33v10h8" fill="none" stroke="#17a2aa" strokeWidth="4" strokeLinecap="round" strokeLinejoin="round" />
  </>
);

const Trash = () => (
  <>
    <defs><pattern id="trM" width="3" height="3" patternUnits="userSpaceOnUse"><path d="M0 0h3v3H0z" fill="#424242" /><path d="M0 0l3 3M3 0L0 3" stroke="#bbb" strokeWidth=".7" /></pattern></defs>
    <path d="M7 8h34l-5 35c-5 4-19 4-24 0z" fill="url(#trM)" />
    <ellipse cx="24" cy="8.500" rx="17" ry="5" fill="#555" stroke="#ddd" strokeWidth="1.600" />
    <path d="M12 10l4-5 6 1 4-2 6 3 4 2-4 5-8 1-8-1z" fill="#f2f2f2" stroke="#bbb" strokeWidth=".7" />
    <path d="M7 9c3 6 31 6 34 0" fill="none" stroke="#ccc" strokeWidth="1.600" /><path d="M12 42c5 4 19 4 24 0" fill="none" stroke="#d8d8d8" strokeWidth="2.500" />
  </>
);

type DockItem = { name: string; art: () => React.ReactElement; running?: boolean; glow?: string };

const apps: DockItem[] = [
  { name: "Finder", art: Finder, running: true, glow: "#c5cfe4" },
  { name: "Safari", art: Safari, running: true, glow: "#9dd6dd" },
  { name: "Launchpad", art: Launchpad, glow: "#c4c2b8" },
  { name: "Outlook", art: Outlook, running: true, glow: "#ead986" },
  { name: "Eclipse", art: Eclipse, running: true, glow: "#aaa2b5" },
  { name: "Chrome", art: Chrome, running: true, glow: "#b7cf8c" },
  { name: "Terminal", art: Terminal, running: true, glow: "#b5b3aa" },
  { name: "Serial", art: SerialPlug, running: true, glow: "#c2bfa8" },
  { name: "Excel", art: Excel, running: true, glow: "#9bcb8d" },
  { name: "Acrobat", art: Acrobat, running: true, glow: "#ed7b68" },
  { name: "Calendar", art: Calendar, glow: "#d8d6cd" },
  { name: "Stickies", art: Notes, running: true, glow: "#e2daa0" },
  { name: "Messages", art: Messages, glow: "#a9e0de" },
  { name: "System Preferences", art: Preferences, running: true, glow: "#bdbbb1" },
  { name: "Lync", art: Lync, running: true, glow: "#8ddcd6" },
  { name: "Mail", art: Mail, running: true, glow: "#dedcd2" },
  { name: "VMware", art: VMware, running: true, glow: "#ec938a" },
  { name: "Skype", art: Skype, running: true, glow: "#91d7e0" },
  { name: "iTunes", art: ITunes, running: true, glow: "#f0a0ac" },
  { name: "Firefox", art: Firefox, running: true, glow: "#eda38a" },
  { name: "Java", art: Java, running: true, glow: "#eeece4" },
];

const stacks: DockItem[] = [
  { name: "Documents", art: DocumentsFolder, glow: "#c3cfd2" },
  { name: "Lync window", art: LyncWindow, glow: "#9daeca" },
  { name: "Trash", art: Trash, glow: "#c9c7bc" },
];

function DockIcon({ item }: { item: DockItem }) {
  const Art = item.art;
  return (
    <button aria-label={item.name} className="flex min-w-0 flex-1 justify-center">
      <svg width="48" height="60" viewBox="0 0 48 60" className="shrink-0">
        <rect x="6" y="47" width="36" height="8" fill={item.glow} opacity=".8" className="blur-[2px]" />
        <Art />
        {item.running && <><rect x="16" y="56" width="16" height="4" rx="2" fill="#8fc9ee" opacity=".7" /><rect x="18" y="57" width="12" height="3" rx="1" fill="#fff" /></>}
      </svg>
    </button>
  );
}

function Dock() {
  return (
    <footer className="relative h-[70px] overflow-hidden bg-[#0c0c0c]">
      <svg className="absolute inset-0 size-full" viewBox="0 0 1280 70" preserveAspectRatio="none" aria-hidden="true">
        <defs>
          <linearGradient id="shelf" x2="0" y2="1"><stop stopColor="#8d8b83" /><stop offset=".4" stopColor="#b9b6aa" /><stop offset="1" stopColor="#eeebdd" /></linearGradient>
          <linearGradient id="desk" x2="0" y2="1"><stop stopColor="#23718d" /><stop offset=".25" stopColor="#3393b7" /><stop offset="1" stopColor="#3a9fc6" /></linearGradient>
        </defs>
        <path d="M1001 0h279v70h-279z" fill="url(#desk)" />
        <path d="M1171 0h57c-2 14-13 25-28 25s-27-11-29-25z" fill="#111" />
        <path d="M44 32H1236q3 0 5 3L1257 66H24L41 35q1-3 3-3z" fill="url(#shelf)" />
        <path d="M24 66h1233v4H24z" fill="#999891" /><path d="M24 66h1233" stroke="#f7f5ea" />
      </svg>
      <div className="relative flex h-full items-end pl-[45px] pr-[41px]">
        {apps.map((a) => <DockIcon key={a.name} item={a} />)}
        <svg width="23" height="60" viewBox="0 0 23 60" className="shrink-0" aria-hidden="true"><path d="M6 26l9 25" stroke="#88867d" strokeWidth="1.500" /></svg>
        {stacks.map((a) => <DockIcon key={a.name} item={a} />)}
      </div>
    </footer>
  );
}

export default function App() {
  return (
    <div className="flex min-h-screen flex-col overflow-hidden bg-black font-[Lucida_Grande,Noto_Sans,sans-serif]">
      <MenuBar />
      <TabStrip />
      <div className="border-b border-[#999] bg-linear-to-b from-[#e3e3e3] to-[#c3c3c3]">
        <NavBar />
        <BookmarksBar />
      </div>
      <WebPage />
      <Dock />
    </div>
  );
}
